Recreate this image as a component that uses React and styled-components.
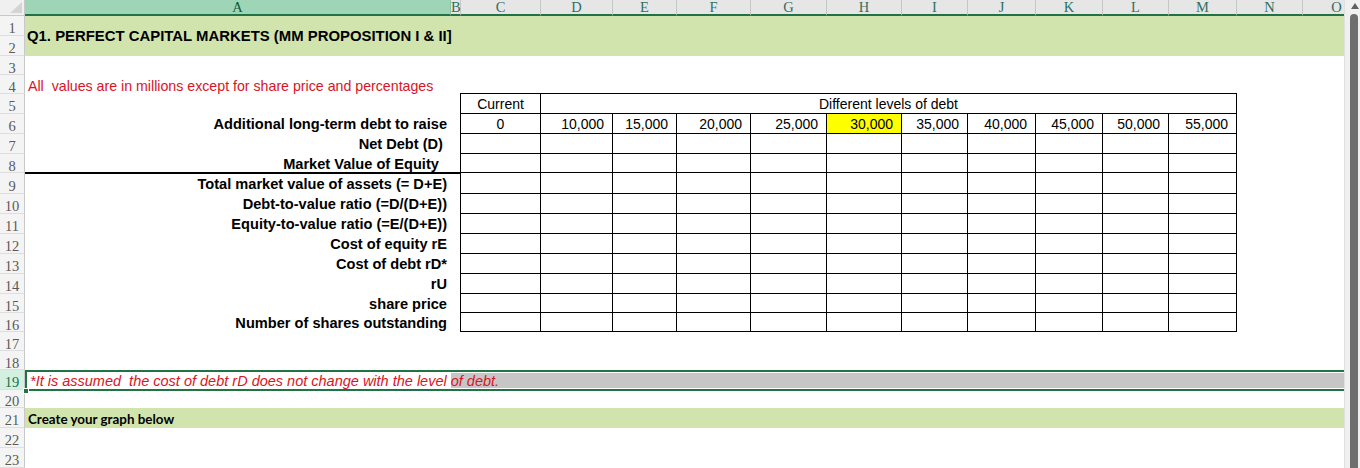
import React from 'react';
import styled, { createGlobalStyle } from 'styled-components';

const GREEN = '#217346';
const BAND = '#d1e4ae';
const RED = '#d81426';

const COLS = [
  { k: 'A', w: 426 }, { k: 'B', w: 10 }, { k: 'C', w: 80 }, { k: 'D', w: 72 },
  { k: 'E', w: 64 }, { k: 'F', w: 74 }, { k: 'G', w: 76 }, { k: 'H', w: 75 },
  { k: 'I', w: 66 }, { k: 'J', w: 68 }, { k: 'K', w: 67 }, { k: 'L', w: 66 },
  { k: 'M', w: 68 }, { k: 'N', w: 66 }, { k: 'O', w: 68 },
];
const ROW_H = [20, 20, 19, 19, 20, 20, 20, 19, 21, 20, 20, 20, 20, 20, 19, 19, 19, 19, 20, 18, 20, 20, 20];
const TABLE_COLS = COLS.slice(2, 13).map((c) => c.w + 'px').join(' ');
const TABLE_ROWS = ROW_H.slice(4, 16).map((h) => h + 'px').join(' ');

const LABELS = [
  'Additional long-term debt to raise',
  'Net Debt (D) ',
  'Market Value of Equity  ',
  'Total market value of assets (= D+E)',
  'Debt-to-value ratio (=D/(D+E))',
  'Equity-to-value ratio (=E/(D+E))',
  'Cost of equity rE',
  'Cost of debt rD*',
  'rU',
  'share price',
  'Number of shares outstanding',
];
const DEBT = ['10,000', '15,000', '20,000', '25,000', '30,000', '35,000', '40,000', '45,000', '50,000', '55,000'];

const Global = createGlobalStyle`
  * { box-sizing: border-box; }
  html, body { margin: 0; padding: 0; background: #fff; }
  body { font-family: "Liberation Sans", Arial, sans-serif; overflow: hidden; }
`;

const Window = styled.div`
  display: flex;
  width: 1360px;
  height: 468px;
  overflow: hidden;
  background: #fff;
`;

const Sheet = styled.div`
  flex: 0 0 1344px;
  height: 468px;
  overflow: hidden;
  display: grid;
  grid-template-columns: 25px ${COLS.map((c) => c.w + 'px').join(' ')};
  grid-template-rows: 16px ${ROW_H.map((h) => h + 'px').join(' ')};
  position: relative;
`;

const Corner = styled.div`
  grid-column: 1;
  grid-row: 1;
  background: #f0f0f0;
  border-right: 1px solid #c8c8c8;
  border-bottom: 1px solid #c8c8c8;
  position: relative;
  &::after {
    content: '';
    position: absolute;
    right: 2px;
    bottom: 2px;
    border-style: solid;
    border-width: 0 0 11px 12px;
    border-color: transparent transparent #d4d4d4 transparent;
  }
`;

const ColHeader = styled.div`
  grid-row: 1;
  grid-column: ${(p) => p.$col};
  background: ${(p) => (p.$active ? '#9fd5b7' : '#e6e6e6')};
  border-right: 1px solid ${(p) => (p.$active ? '#8cc2a5' : '#c6c6c6')};
  border-bottom: 2px solid ${GREEN};
  color: ${(p) => (p.$active ? '#0f5a35' : '#2f6f60')};
  font-family: "Liberation Serif", "Times New Roman", serif;
  font-size: 14.5px;
  line-height: 14px;
  text-align: center;
  white-space: nowrap;
`;

const RowHeader = styled.div`
  grid-column: 1;
  grid-row: ${(p) => p.$row};
  background: ${(p) => (p.$active ? '#d3f0e0' : '#f4f4f4')};
  border-right: 1px solid #c8c8c8;
  border-bottom: 1px solid #dedede;
  color: ${(p) => (p.$active ? GREEN : '#5a5a5a')};
  font-family: "Liberation Serif", "Times New Roman", serif;
  font-size: 14.5px;
  display: flex;
  align-items: center;
  justify-content: center;
  padding-top: 6px;
`;

const TitleBand = styled.div`
  grid-column: 2 / -1;
  grid-row: 2 / span 2;
  background: ${BAND};
  display: flex;
  align-items: center;
  padding-left: 2px;
  font-weight: bold;
  font-size: 14.9px;
  color: #000;
  white-space: pre;
`;

const Note = styled.div`
  grid-column: 2 / -1;
  grid-row: 5;
  display: flex;
  align-items: center;
  padding: 2px 0 0 3px;
  font-size: 14.2px;
  color: ${RED};
  white-space: pre;
`;

const Label = styled.div`
  grid-column: 2;
  grid-row: ${(p) => p.$row};
  display: flex;
  align-items: center;
  justify-content: flex-end;
  padding-right: 4px;
  font-weight: bold;
  font-size: 14.6px;
  color: #000;
  white-space: pre;
`;

const ThickRule = styled.div`
  grid-column: 2 / span 2;
  grid-row: 9;
  align-self: end;
  height: 2px;
  margin-bottom: -1px;
  background: #000;
`;

const DataTable = styled.div`
  grid-column: 4 / span 11;
  grid-row: 6 / span 12;
  margin: -1px 0 0 -1px;
  display: grid;
  grid-template-columns: ${TABLE_COLS};
  grid-template-rows: ${TABLE_ROWS};
  border-top: 1px solid #000;
  border-left: 1px solid #000;
`;

const TCell = styled.div`
  grid-column: span ${(p) => p.$span || 1};
  border-right: 1px solid #000;
  border-bottom: 1px solid #000;
  background: ${(p) => (p.$hl ? '#ffff00' : 'transparent')};
  display: flex;
  align-items: center;
  justify-content: ${(p) => (p.$align === 'right' ? 'flex-end' : p.$align === 'left' ? 'flex-start' : 'center')};
  padding: 1px ${(p) => (p.$align === 'right' ? '8px' : '0')} 0 0;
  font-size: 14px;
  color: #000;
  white-space: nowrap;
`;

const SelectedRow = styled.div`
  grid-column: 2 / -1;
  grid-row: 20;
  display: flex;
  border-top: 2px solid ${GREEN};
  border-bottom: 2px solid ${GREEN};
  border-left: 2px solid ${GREEN};
  margin-bottom: -1px;
  position: relative;
`;

const ActiveCell = styled.div`
  flex: 0 0 424px;
  min-width: 0;
  display: flex;
  align-items: center;
  padding-left: 3px;
  overflow: visible;
`;

const NoteText = styled.span`
  position: relative;
  z-index: 1;
  font-style: italic;
  font-size: 14.5px;
  color: ${RED};
  white-space: pre;
`;

const RangeFill = styled.div`
  flex: 1;
  margin: 1px 0;
  background: #c6c6c6;
`;

const FillHandle = styled.div`
  position: absolute;
  left: -4px;
  bottom: -5px;
  width: 6px;
  height: 6px;
  background: ${GREEN};
  border: 1px solid #fff;
  z-index: 2;
`;

const GraphBand = styled.div`
  grid-column: 2 / -1;
  grid-row: 22;
  background: ${BAND};
  display: flex;
  align-items: center;
  padding: 1px 0 0 3px;
  font-family: Lato, "Open Sans", sans-serif;
  font-weight: bold;
  font-size: 13.4px;
  color: #000;
`;

const Scrollbar = styled.div`
  flex: 0 0 16px;
  display: flex;
  flex-direction: column;
  background: #f0f0f0;
  border-left: 1px solid #e0e0e0;
`;

const ArrowUp = styled.svg`
  display: block;
  margin: 3px 0 0 6px;
  flex: 0 0 auto;
`;

const Thumb = styled.div`
  flex: 1;
  width: 8px;
  margin: 5px 0 0 5px;
  background: #6e6e6e;
  border-radius: 4px 4px 0 0;
`;

export default function App() {
  return (
    <>
      <Global />
      <Window>
        <Sheet>
          <Corner />
          {COLS.map((c, i) => (
            <ColHeader key={c.k} $col={i + 2} $active={c.k === 'A'}>
              {c.k}
            </ColHeader>
          ))}
          {ROW_H.map((_, i) => (
            <RowHeader key={i} $row={i + 2} $active={i + 1 === 19}>
              {i + 1}
            </RowHeader>
          ))}

          <TitleBand>Q1. PERFECT CAPITAL MARKETS (MM PROPOSITION I &amp; II]</TitleBand>
          <Note>{'All  values are in millions except for share price and percentages'}</Note>

          {LABELS.map((l, i) => (
            <Label key={l} $row={i + 7}>
              {l}
            </Label>
          ))}
          <ThickRule />

          <DataTable>
            <TCell>Current</TCell>
            <TCell $span={10}>Different levels of debt</TCell>
            <TCell>0</TCell>
            {DEBT.map((d) => (
              <TCell key={d} $align="right" $hl={d === '30,000'}>
                {d}
              </TCell>
            ))}
            {Array.from({ length: 10 * 11 }).map((_, i) => (
              <TCell key={'e' + i} />
            ))}
          </DataTable>

          <SelectedRow>
            <ActiveCell>
              <NoteText>{'*It is assumed  the cost of debt rD does not change with the level of debt.'}</NoteText>
            </ActiveCell>
            <RangeFill />
            <FillHandle />
          </SelectedRow>

          <GraphBand>Create your graph below</GraphBand>
        </Sheet>
        <Scrollbar>
          <ArrowUp width="8" height="6" viewBox="0 0 8 6">
            <path d="M4 0 L8 6 L0 6 Z" fill="#606060" />
          </ArrowUp>
          <Thumb />
        </Scrollbar>
      </Window>
    </>
  );
}
